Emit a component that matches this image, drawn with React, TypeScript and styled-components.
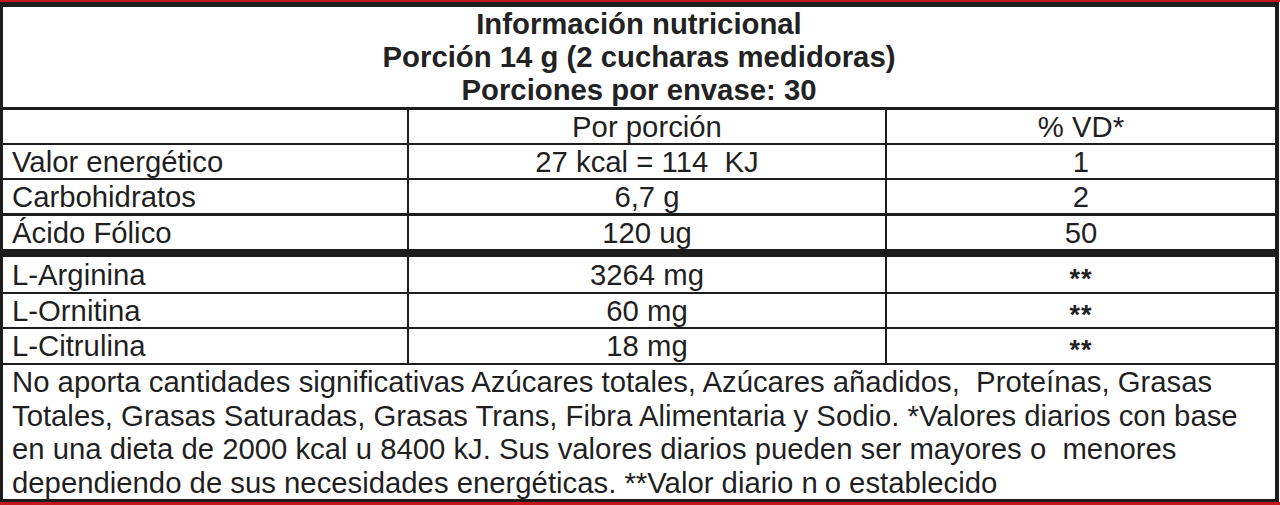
import React from "react";
import styled, { createGlobalStyle } from "styled-components";

const GlobalStyle = createGlobalStyle`
  html, body {
    margin: 0;
    padding: 0;
    background: #ffffff;
  }
  body {
    font-family: "Liberation Sans", Arial, Helvetica, sans-serif;
    color: #1f1f1f;
  }
`;

const INK = "#1d1d1d";
const RED = "#c3161f";
const TEXT_SIZE = "29.3px";

const Page = styled.div`
  width: 1280px;
  height: 505px;
  box-sizing: border-box;
  border-top: 2px solid ${RED};
  border-bottom: 3px solid ${RED};
  display: flex;
`;

const Label = styled.div`
  flex: 1;
  margin-right: 1px;
  border-style: solid;
  border-color: ${INK};
  border-width: 5px 4px 3px 3px;
  display: flex;
  flex-direction: column;
  min-width: 0;
`;

const Header = styled.div`
  height: 100px;
  border-bottom: 3px solid ${INK};
  display: flex;
  flex-direction: column;
  align-items: center;
  font-weight: 700;
  font-size: ${TEXT_SIZE};
  line-height: 33px;
  color: #222;
  white-space: nowrap;
`;

const Grid = styled.div`
  display: grid;
  grid-template-columns: 406px 478px 1fr;
`;

const Cell = styled.div<{ $h: number; $line: number; $align?: "left" | "center"; $last?: boolean }>`
  height: ${p => p.$h}px;
  line-height: ${p => p.$h}px;
  border-bottom: ${p => p.$line}px solid ${INK};
  border-right: ${p => (p.$last ? "none" : `2px solid ${INK}`)};
  font-size: ${TEXT_SIZE};
  white-space: nowrap;
  text-align: ${p => p.$align || "center"};
  padding-left: ${p => (p.$align === "left" ? "9px" : "0")};
`;

const ThickRule = styled.div`
  grid-column: 1 / -1;
  height: 8px;
  background: ${INK};
`;

const Stars = styled.span`
  display: inline-block;
  font-size: 27px;
  font-weight: 700;
  letter-spacing: 1px;
  transform: translateY(3px);
`;

const Footer = styled.div`
  flex: 1;
  padding: 0 0 0 9px;
  font-size: ${TEXT_SIZE};
  line-height: 33.5px;
  white-space: nowrap;
`;

const Gap = styled.span`
  margin-left: 7px;
`;

type Row = { name: string; amount: string; vd: React.ReactNode; h: number; line: number };

const topRows: Row[] = [
  { name: "Valor energético", amount: "27 kcal = 114\u00a0 KJ", vd: "1", h: 33, line: 2 },
  { name: "Carbohidratos", amount: "6,7 g", vd: "2", h: 33, line: 3 },
  { name: "Ácido Fólico", amount: "120 ug", vd: "50", h: 33, line: 0 },
];

const aminoRows: Row[] = [
  { name: "L-Arginina", amount: "3264 mg", vd: <Stars>**</Stars>, h: 35, line: 2 },
  { name: "L-Ornitina", amount: "60 mg", vd: <Stars>**</Stars>, h: 33, line: 2 },
  { name: "L-Citrulina", amount: "18 mg", vd: <Stars>**</Stars>, h: 34, line: 2 },
];

const renderRow = (r: Row) => (
  <React.Fragment key={r.name}>
    <Cell $h={r.h} $line={r.line} $align="left">{r.name}</Cell>
    <Cell $h={r.h} $line={r.line}>{r.amount}</Cell>
    <Cell $h={r.h} $line={r.line} $last>{r.vd}</Cell>
  </React.Fragment>
);

export default function App() {
  return (
    <>
      <GlobalStyle />
      <Page>
        <Label>
          <Header>
            <div>Información nutricional</div>
            <div>Porción 14 g (2 cucharas medidoras)</div>
            <div>Porciones por envase: 30</div>
          </Header>
          <Grid>
            <Cell $h={33} $line={2} $align="left"></Cell>
            <Cell $h={33} $line={2}>Por porción</Cell>
            <Cell $h={33} $line={2} $last>% VD*</Cell>
            {topRows.map(renderRow)}
            <ThickRule />
            {aminoRows.map(renderRow)}
          </Grid>
          <Footer>
            No aporta cantidades significativas Azúcares totales, Azúcares añadidos,&nbsp; Proteínas, Grasas
            <br />
            Totales, Grasas Saturadas, Grasas Trans, Fibra Alimentaria y Sodio. *Valores diarios con base
            <br />
            en una dieta de 2000 kcal u 8400 kJ. Sus valores diarios pueden ser mayores o&nbsp; menores
            <br />
            dependiendo de sus necesidades energéticas. **Valor diario n<Gap>o</Gap> establecido
          </Footer>
        </Label>
      </Page>
    </>
  );
}
